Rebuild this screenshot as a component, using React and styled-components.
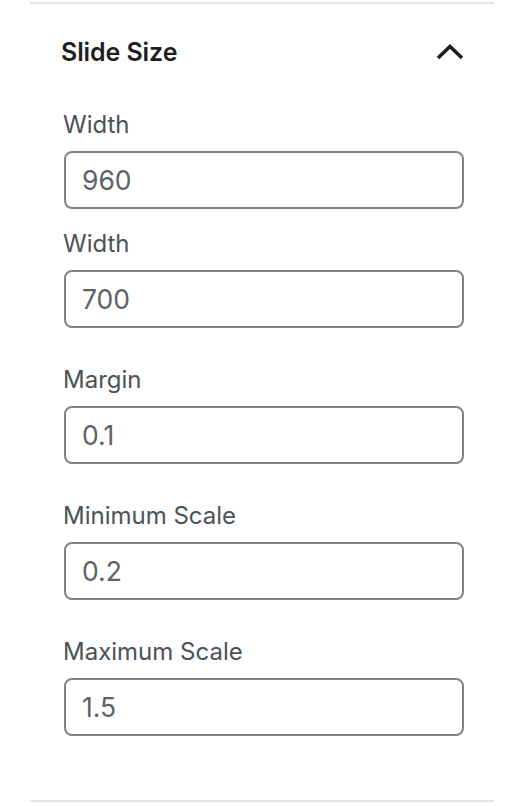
import React from "react";
import styled, { createGlobalStyle } from "styled-components";

const Global = createGlobalStyle`
  html, body { margin: 0; padding: 0; background: #ffffff; }
  body { font-family: Inter, "Noto Sans", "Liberation Sans", sans-serif; -webkit-font-smoothing: antialiased; }
  * { box-sizing: border-box; }
`;

const Panel = styled.section`
  margin: 2px 18px 0 30px;
  width: 464px;
  border-top: 2px solid #e2e4e7;
  border-bottom: 2px solid #e2e4e7;
`;

const Header = styled.button`
  display: flex;
  align-items: center;
  justify-content: space-between;
  width: 100%;
  height: 96px;
  padding: 0 30px 0 31px;
  border: 0;
  background: transparent;
  font-family: inherit;
  cursor: pointer;
`;

const Title = styled.h2`
  margin: 0;
  font-size: 25px;
  line-height: 32px;
  font-weight: 600;
  color: #1e1e1e;
  letter-spacing: -0.1px;
`;

const Chevron = styled.svg`
  width: 28px;
  height: 18px;
  display: block;
  margin-right: 0;
`;

const Body = styled.div`
  padding: 9px 30px 64px 34px;
`;

const Field = styled.div`
  display: flex;
  flex-direction: column;
  margin-bottom: ${(p) => (p.$tight ? "19px" : "36px")};
  &:last-child { margin-bottom: 0; }
`;

const Label = styled.label`
  font-size: 24px;
  line-height: 32px;
  color: #4c5157;
  margin: 0 0 10px -1px;
`;

const Input = styled.input`
  width: 400px;
  height: 58px;
  padding: 0 17px 0 16px;
  border: 2px solid #7e8389;
  border-radius: 8px;
  font-family: inherit;
  font-size: 26.5px;
  color: #5d6267;
  background: #ffffff;
  outline: none;
`;

const fields = [
  { label: "Width", value: "960", tight: true },
  { label: "Width", value: "700" },
  { label: "Margin", value: "0.1" },
  { label: "Minimum Scale", value: "0.2" },
  { label: "Maximum Scale", value: "1.5" },
];

export default function App() {
  return (
    <>
      <Global />
      <Panel>
        <Header type="button" aria-expanded="true">
          <Title>Slide Size</Title>
          <Chevron viewBox="0 0 28 18" aria-hidden="true">
            <polyline
              points="2,15 14,3.5 26,15"
              fill="none"
              stroke="#1e1e1e"
              strokeWidth="3.6"
              strokeLinejoin="miter"
            />
          </Chevron>
        </Header>
        <Body>
          {fields.map((f, i) => (
            <Field key={i} $tight={f.tight}>
              <Label htmlFor={`f${i}`}>{f.label}</Label>
              <Input id={`f${i}`} type="text" defaultValue={f.value} />
            </Field>
          ))}
        </Body>
      </Panel>
    </>
  );
}
